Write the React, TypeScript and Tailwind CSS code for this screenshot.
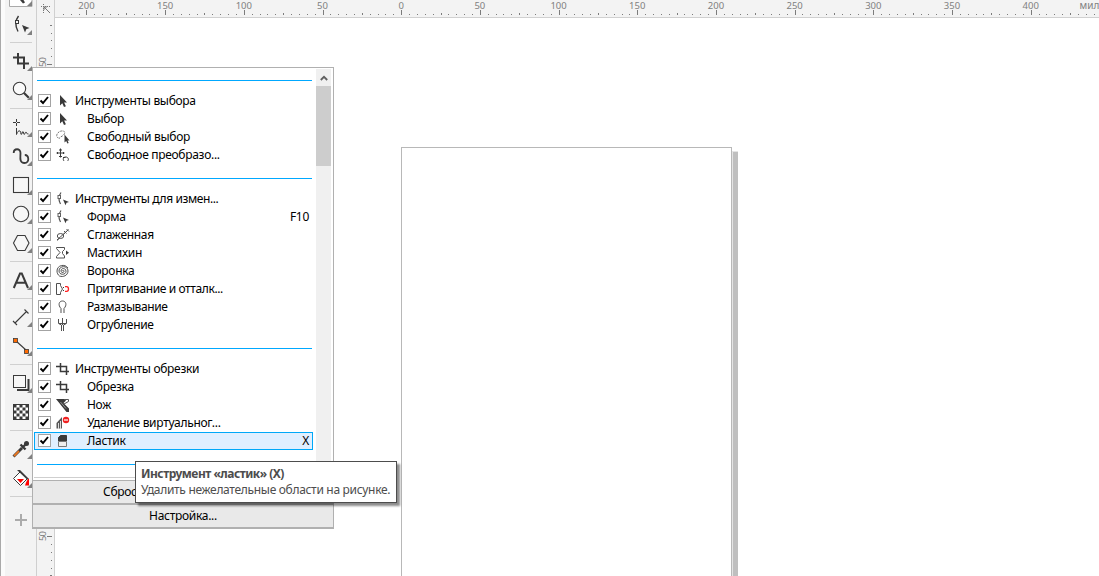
import type { ReactNode } from 'react';

const INK = '#3a3a3a';
const SCALE = 1.5737;

type ToolName =
  | 'shape' | 'crop' | 'zoom' | 'freehand' | 'artistic' | 'rect' | 'ellipse' | 'polygon' | 'text'
  | 'dimension' | 'connector' | 'shadow' | 'checker' | 'eyedropper' | 'fill';

/* Each drawing sits on a 31 x 29 cell. */
const toolArt: Record<ToolName, ReactNode> = {
  shape: (
    <>
      <path d="M13.500 7C10.500 11 9.500 16 13 22.500" fill="none" stroke={INK} strokeWidth="1.400" />
      <rect x="10.500" y="11.500" width="3" height="3" fill="#f3f3f3" stroke={INK} />
      <path d="M17 16l7.500 3-3.200 1.300-1.300 3.200z" fill={INK} />
    </>
  ),
  crop: <path d="M8 12.500h11v11.500M24 18.500H13V8" fill="none" stroke={INK} strokeWidth="2" />,
  zoom: (
    <>
      <circle cx="14.500" cy="14.500" r="6.200" fill="#fafafa" stroke={INK} strokeWidth="1.100" />
      <path d="M18.800 18.800l5 5" stroke={INK} strokeWidth="2.200" />
    </>
  ),
  freehand: (
    <>
      <path d="M8 11.500h3M12 11.500h3M11.500 8v3M11.500 12v3" stroke={INK} />
      <path d="M11.500 17v6.500c1-3 2-4 3.500-3.500s.3 3.500 1.200 3.500 1-3 1.800-3 .5 3 1.200 3 1-2.500 1.800-2.500.5 2.500 2.500 2" fill="none" stroke={INK} />
    </>
  ),
  artistic: <path d="M8.700 13c0-5 6.800-5 6.800 0 0 4-1.500 10 4 10s4.500-8 .3-8" fill="none" stroke={INK} strokeWidth="1.800" />,
  rect: <rect x="8.500" y="8.500" width="15" height="15" fill="#f7f7f7" stroke={INK} strokeWidth="1.100" />,
  ellipse: <circle cx="16" cy="16" r="7.700" fill="#f7f7f7" stroke={INK} strokeWidth="1.100" />,
  polygon: <path d="M8.500 16l4-7.500h7.500l4 7.500-4 7.500h-7.500z" fill="#f7f7f7" stroke={INK} strokeWidth="1.100" />,
  text: <path d="M8.800 24l6.200-14.500h1.800L23 24M11 18.700h9.800" fill="none" stroke={INK} strokeWidth="2" />,
  dimension: <path d="M10 22l11.500-11.500M8 20l4 4M19.500 8.500l4 4" stroke={INK} strokeWidth="1.100" />,
  connector: (
    <>
      <path d="M11 11l10 9" stroke={INK} strokeWidth="1.100" />
      <rect x="8.500" y="8.500" width="4" height="4" fill="#ff6a00" stroke={INK} strokeWidth=".8" />
      <rect x="19.500" y="19.500" width="4" height="4" fill="#ff6a00" stroke={INK} strokeWidth=".8" />
    </>
  ),
  shadow: (
    <>
      <rect x="8.500" y="8.500" width="12" height="12" fill="#f7f7f7" stroke={INK} />
      <path d="M12 23h11.500V12" fill="none" stroke={INK} strokeWidth="2" />
    </>
  ),
  checker: (
    <>
      <rect x="8.500" y="8.500" width="15" height="15" fill="#fff" stroke={INK} />
      {[0, 1, 2, 3, 4].flatMap((r) =>
        [0, 1, 2, 3, 4].map((c) =>
          (r + c) % 2 === 0 ? <rect key={`${r}-${c}`} x={8.5 + c * 3} y={8.5 + r * 3} width="3" height="3" fill={INK} /> : null,
        ),
      )}
    </>
  ),
  eyedropper: (
    <>
      <path d="M8.500 23.500l8.500-8.500" stroke={INK} strokeWidth="2.800" />
      <path d="M9 23l5-5" stroke="#e87722" strokeWidth="1.800" />
      <path d="M15.500 11.500l5 5M17 15l4.500-4.500" stroke={INK} strokeWidth="2.400" />
      <circle cx="21.500" cy="10.500" r="2.500" fill={INK} />
    </>
  ),
  fill: (
    <>
      <path d="M8.500 16.500l7-7 7 7-7 7z" fill="#fff" stroke={INK} />
      <path d="M12 8h3l9 9-2 .5z" fill={INK} />
      <path d="M12 17h7l-3.500 4z" fill="red" />
      <path d="M24 16.500v7h-4c1-3 2-6 4-7z" fill="red" />
    </>
  ),
};

const Tool = ({ name }: { name: ToolName }) => (
  <svg className="block h-[29px] w-[31px] shrink-0" viewBox="0 0 31 29">
    {toolArt[name]}
    {name !== 'checker' && <path d="M27 21v5h-5z" fill="#808080" />}
  </svg>
);

const ToolGap = () => (
  <div className="h-2 shrink-0 pt-[5px] pl-[5px]">
    <div className="h-px w-[22px] bg-[#d0d0d0]" />
  </div>
);

const toolGroups: ToolName[][] = [
  ['crop', 'zoom'],
  ['freehand', 'artistic', 'rect', 'ellipse', 'polygon'],
  ['text'],
  ['dimension', 'connector'],
  ['shadow', 'checker'],
  ['eyedropper', 'fill'],
];

function Toolbar() {
  return (
    <aside className="flex h-full w-[37px] shrink-0 border-r border-l border-l-[#a9a9a9] border-r-[#cfcfcf] bg-[#f3f3f3]">
      <div className="h-full w-1 bg-[#fbfbfb]" />
      <div className="flex w-[31px] flex-col">
        <svg className="block h-[9px] w-[31px] shrink-0" viewBox="0 0 31 9">
          <path d="M4.500 0v6.500H27V0" fill="#fff" stroke="#aaa" />
          <path d="M15 0h3.500l1.500 2.500-2 1z" fill={INK} />
          <path d="M27 1v5h-5z" fill="#808080" />
        </svg>
        <Tool name="shape" />
        <div className="h-[7px] pt-1 pl-[5px]">
          <div className="h-px w-[22px] bg-[#d0d0d0]" />
        </div>
        {toolGroups.map((g, i) => (
          <div key={i} className="flex flex-col">
            {g.map((t) => <Tool key={t} name={t} />)}
            <ToolGap />
          </div>
        ))}
        <svg className="mt-[14px] ml-[10px] block h-[13px] w-[13px]" viewBox="0 0 13 13">
          <path d="M0 7h12M6 1v12" stroke="#ababab" strokeWidth="2" />
        </svg>
      </div>
    </aside>
  );
}

function TopRuler() {
  const ticks = Array.from({ length: 135 }, (_, i) => (i - 45) * 5).filter((v) => 346.7 + v * SCALE > 5);
  return (
    <svg className="block h-[17px] w-full" viewBox="0 0 1044 17">
      {ticks.map((v) => {
        const x = Math.floor(346.7 + v * SCALE);
        const h = v % 50 === 0 ? 5 : v % 25 === 0 ? 2 : 1;
        return <rect key={v} x={x} y={h === 5 ? 10 : 15 - h} width="1" height={h} fill="#7c7c7c" />;
      })}
      {ticks.filter((v) => v % 50 === 0 && v <= 400).map((v) => (
        <text key={v} x={346.2 + v * SCALE} y="9" textAnchor="middle" fontSize="9.500" fontFamily="Noto Sans, sans-serif" fill="#808080">
          {Math.abs(v)}
        </text>
      ))}
      <text x="1024.500" y="9" fontSize="10" fontFamily="Noto Sans, sans-serif" fill="#808080">милл</text>
    </svg>
  );
}

function SideRuler() {
  const marks = Array.from({ length: 72 }, (_, i) => i - 5);
  return (
    <svg className="block h-[558px] w-[17px]" viewBox="0 18 17 558">
      {marks.map((i) => {
        const y = Math.floor(64.5 + i * 5 * SCALE);
        const w = i % 10 === 0 ? 5 : i % 5 === 0 ? 2 : 1;
        return <rect key={i} x={w === 5 ? 10 : 15 - w} y={y} width={w} height="1" fill="#7c7c7c" />;
      })}
      {[63, 537].map((y) => (
        <text key={y} transform={`translate(9 ${y + 4}) rotate(-90)`} fontSize="9.500" fontFamily="Noto Sans, sans-serif" fill="#808080" textLength="10">
          50
        </text>
      ))}
    </svg>
  );
}

type IconName =
  | 'arrow' | 'lasso' | 'transform' | 'shape' | 'smooth' | 'smear' | 'twirl' | 'attract' | 'smudge' | 'roughen'
  | 'crop' | 'knife' | 'segment' | 'eraser';

const menuArt: Record<IconName, ReactNode> = {
  arrow: <path d="M5 2v10.500l2.300-2.300 1.700 3.800 1.900-.8-1.800-3.700H12z" fill={INK} />,
  lasso: (
    <>
      <path d="M3.500 9C0 8 2 2.500 6.500 2c4-.5 4 2.500 1.500 4.500C6 8 4 8.500 4.500 9.500" fill="none" stroke="#707070" strokeDasharray="2 1" />
      <path d="M9.500 5.500v8l1.700-1.500 1.200 2.500 1.300-.6-1.200-2.400h2z" fill={INK} />
    </>
  ),
  transform: (
    <>
      <path d="M5.500 1.500v9M1.500 6h8M4 3h3M4 9.500h3M2.500 5v2M8.500 5v2" stroke={INK} />
      <path d="M9 14c-1.500-2-.5-4 1.800-4s3.500 2.500 1.700 4M8 10.500h2.500" fill="none" stroke={INK} />
    </>
  ),
  shape: (
    <>
      <path d="M6 1.500C3.500 5 3.300 9 5.500 13" fill="none" stroke="#505050" strokeWidth="1.200" />
      <rect x="3" y="4.500" width="2.500" height="3" fill="#fff" stroke="#606060" />
      <path d="M8 8.500l6 2.500-2.500.7-1 2.500z" fill={INK} />
    </>
  ),
  smooth: (
    <>
      <path d="M2 13.500L13.500 2.500" stroke="#505050" />
      <ellipse cx="5.500" cy="9" rx="3.200" ry="2.500" fill="#fff" stroke="#505050" />
      <path d="M2 13L12 4M9 4l2.500 2.500M11.500 2l2.500 2.500" fill="none" stroke="#505050" />
    </>
  ),
  smear: (
    <>
      <path d="M9.500 2.500h-8v1l3.500 4-3.500 4v1.500h8v-2L7.500 8.500v-2l2-2z" fill="none" stroke="#505050" />
      <path d="M11 5.500l3 2.300-3 2.300z" fill={INK} />
    </>
  ),
  twirl: (
    <path
      d="M7.500 8c0-1 1.500-1 1.500.3C9 10 6 10 6 8c0-3.500 5-3.200 5 .3 0 4-7 4-7-.3 0-5.800 9-5.800 9 0 0 4.500-5 6.500-8.500 5M13 5C10 .5 2 2 2 8c0 2 1 4 2.500 5"
      fill="none"
      stroke="#505050"
    />
  ),
  attract: (
    <>
      <path d="M1.500 2.500H5.500v2l2 3.500-2 3.500v2H1.500z" fill="none" stroke="#505050" />
      <path d="M8 6.500h1M8 9.500h1" stroke={INK} />
      <path d="M10 5.700h1.700c2.400 0 2.400 4.600 0 4.600H10" fill="none" stroke="#f22" strokeWidth="1.300" />
    </>
  ),
  smudge: <path d="M6 14V9.500C2.700 6 4 2 7.500 2S12.300 6 9 9.500V14" fill="none" stroke="#505050" />,
  roughen: (
    <>
      <path d="M3.500 2v4.500L6.500 8V14M11.500 2v4.500L8.500 8V14" fill="none" stroke="#505050" />
      <path d="M7.500 1v7M4 6.500h7" stroke="#505050" />
    </>
  ),
  crop: <path d="M1 5.500h10.500V14M14 10.500H5.500V2" fill="none" stroke={INK} strokeWidth="1.500" />,
  knife: (
    <>
      <path d="M1 2h8.500l1.500 1.500-2.500 2.500L14 11.500V15h-2.500z" fill={INK} />
      <path d="M9 2.500h4.500v2L9 7" fill="none" stroke="#555" />
      <path d="M5.500 5l5.500 6.500" stroke="#aaa" strokeWidth=".8" />
    </>
  ),
  segment: (
    <>
      <path d="M1.500 13.500V8l5.500-6v11.500z" fill={INK} opacity=".85" />
      <path d="M3.500 8v6M5.500 6v8" stroke="#ddd" />
      <circle cx="11" cy="5" r="3.200" fill="#f02020" />
      <path d="M9 5h4" stroke="#fff" strokeWidth="1.200" />
    </>
  ),
  eraser: (
    <>
      <path d="M3.500 8V4.500L5.500 2.500h6V8z" fill={INK} stroke={INK} />
      <path d="M3.500 8.500h8v5h-8z" fill="#eee" stroke="#777" />
    </>
  ),
};

type Entry = { label: string; icon: IconName; head?: boolean; keys?: string; on?: boolean; tight?: boolean };

const groups: Entry[][] = [
  [
    { label: 'Инструменты выбора', icon: 'arrow', head: true },
    { label: 'Выбор', icon: 'arrow' },
    { label: 'Свободный выбор', icon: 'lasso' },
    { label: 'Свободное преобразо...', icon: 'transform' },
  ],
  [
    { label: 'Инструменты для измен...', icon: 'shape', head: true, tight: true },
    { label: 'Форма', icon: 'shape', keys: 'F10' },
    { label: 'Сглаженная', icon: 'smooth' },
    { label: 'Мастихин', icon: 'smear' },
    { label: 'Воронка', icon: 'twirl' },
    { label: 'Притягивание и отталк...', icon: 'attract', tight: true },
    { label: 'Размазывание', icon: 'smudge', tight: true },
    { label: 'Огрубление', icon: 'roughen' },
  ],
  [
    { label: 'Инструменты обрезки', icon: 'crop', head: true },
    { label: 'Обрезка', icon: 'crop' },
    { label: 'Нож', icon: 'knife' },
    { label: 'Удаление виртуальног...', icon: 'segment' },
    { label: 'Ластик', icon: 'eraser', keys: 'X', on: true },
  ],
];

const Row = ({ label, icon, head, keys, on, tight }: Entry) => (
  <div className={`flex h-[18px] w-[279px] items-center border pr-[3px] pl-[3px] ${on ? 'border-[#00a8f8] bg-[#e0efff]' : 'border-transparent'}`}>
    <span className="mb-px grid size-[13px] place-items-center border border-[#a3a3a3] bg-white">
      <svg className="size-[11px]" viewBox="0 0 11 11">
        <path d="M1.500 5.500L4 8l5-6" fill="none" stroke="#000" strokeWidth="1.900" />
      </svg>
    </span>
    <svg className="ml-1 size-4 shrink-0" viewBox="0 0 16 16">{menuArt[icon]}</svg>
    <span className={`${head ? 'ml-1' : 'ml-4'} ${tight ? 'tracking-[-0.39px]' : 'tracking-[-0.3px]'} whitespace-nowrap`}>{label}</span>
    {keys && <span className="ml-auto">{keys}</span>}
  </div>
);

const Rule = ({ first }: { first?: boolean }) => (
  <div className={first ? 'h-6 pt-3 pl-[3px]' : 'h-[26px] pt-[14px] pl-[3px]'}>
    <div className="h-px w-[275px] bg-[#00a8ff]" />
  </div>
);

function ToolMenu() {
  return (
    <section className="absolute top-[67px] left-[32px] flex h-[462px] w-[302px] flex-col border border-b-2 border-[#b0b0b0] bg-white pl-px text-[12px] leading-4 tracking-[-0.3px] text-black">
      <div className="flex h-[412px] shrink-0">
        <div className="w-[282px] overflow-hidden">
          {groups.map((g, i) => (
            <div key={i}>
              <Rule first={i === 0} />
              {g.map((e) => <Row key={e.label} {...e} />)}
            </div>
          ))}
          <Rule />
          <div className="mt-px h-px w-full bg-[#cfcfcf]" />
        </div>
        <div className="mt-px flex w-[15px] flex-col bg-[#f0f0f0]">
          <div className="grid h-[17px] place-items-center">
            <svg className="h-2 w-2" viewBox="0 0 8 8">
              <path d="M.8 6L4 2.800 7.200 6" fill="none" stroke="#606060" strokeWidth="1.800" />
            </svg>
          </div>
          <div className="h-20 bg-[#cdcdcd]" />
        </div>
      </div>
      <div className="-ml-px flex h-[23px] items-center border-t border-[#b0b0b0] bg-[#e9e9e9] pl-[70px]">Сброс</div>
      <div className="-ml-px flex flex-1 items-center justify-center border-t-2 border-[#b0b0b0] bg-[#e9e9e9]">Настройка...</div>
    </section>
  );
}

export default function App() {
  return (
    <main className="relative flex h-[576px] w-[1099px] overflow-hidden bg-white font-['Noto_Sans',sans-serif]">
      <Toolbar />
      <div className="flex w-[18px] shrink-0 flex-col border-r border-[#d0d0d0] bg-[#f3f3f3]">
        <svg className="block h-[18px] w-[17px] shrink-0" viewBox="0 0 17 18">
          <path d="M4 6.500h10M6.500 4v10" stroke="#777" strokeDasharray="1 1" />
          <path d="M7 7l6 6M7 10V7h3" fill="none" stroke="#777" />
        </svg>
        <SideRuler />
      </div>
      <div className="flex flex-1 flex-col">
        <div className="h-[18px] shrink-0 border-b border-[#d0d0d0] bg-[#f3f3f3]">
          <TopRuler />
        </div>
        <div className="flex flex-1 pt-[129px] pl-[346px]">
          <div className="w-[331px] border border-b-0 border-[#b8b8b8] bg-white" />
          <div className="mt-[4px] w-[6px] border-t border-l border-[#e4e4e4] bg-[#bfbfbf]" />
        </div>
      </div>
      <ToolMenu />
      <div className="absolute top-[461px] left-[135px] h-[42px] w-[262px] border border-[#4d4d4d] bg-white pt-1 pl-[5px] text-[12px] leading-4 whitespace-nowrap text-[#4d4d4d] shadow-[3px_3px_2px_rgba(0,0,0,0.45)]">
        <div className="font-bold tracking-[-0.5px]">Инструмент «ластик» (X)</div>
        <div className="tracking-[-0.31px]">Удалить нежелательные области на рисунке.</div>
      </div>
    </main>
  );
}
